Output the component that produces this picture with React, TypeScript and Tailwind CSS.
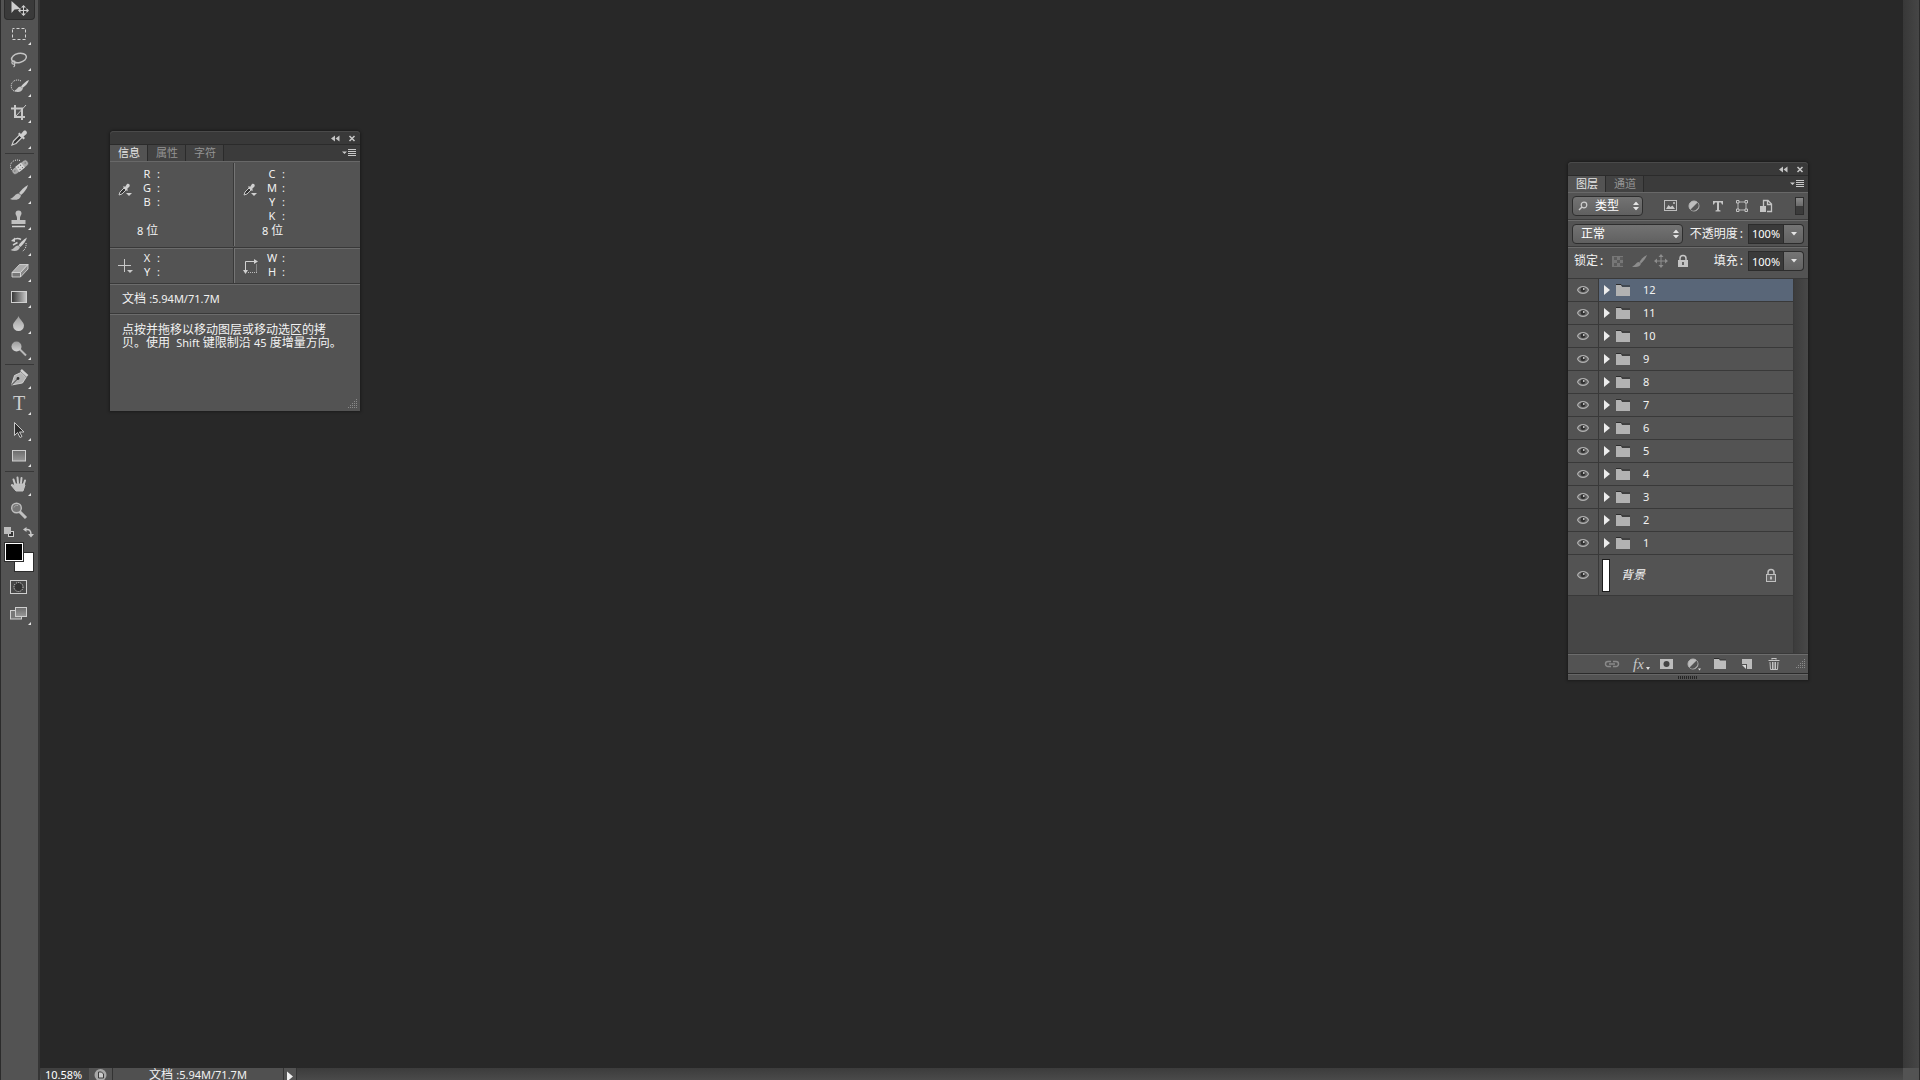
import { useState } from "react";
import type { ReactNode } from "react";
import clsx from "clsx";

const CORNER = <path d="M30 21v3h-3z" fill="#e4e4e4" />;

interface Tool {
  name: string;
  icon: ReactNode;
  corner?: boolean;
}

// Every tool glyph is drawn on a 37x26 grid, the size of its button.
const TOOL_GROUPS: Tool[][] = [
  [
    {
      name: "矩形选框工具",
      corner: true,
      icon: <rect x="11.5" y="7.5" width="13" height="11" fill="none" stroke="#d4d4d4" strokeDasharray="3 2" strokeDashoffset="1" />,
    },
    {
      name: "套索工具",
      corner: true,
      icon: (
        <g fill="none" stroke="#c4c4c4" strokeWidth="1.5">
          <ellipse cx="18" cy="11" rx="7.5" ry="4.5" transform="rotate(-12 18 11)" />
          <circle cx="12.5" cy="15.5" r="1.6" strokeWidth="1.2" />
          <path d="M13 17c1 1 1 2-.5 3" strokeWidth="1.2" />
        </g>
      ),
    },
    {
      name: "快速选择工具",
      corner: true,
      icon: (
        <>
          <path d="M20 8c-3-2-8-1-9.500 3-1 4 1 7 4 7.500" fill="none" stroke="#e0e0e0" strokeDasharray="1 1" />
          <path d="M28 7c-3 1-6 4-8 6.500l1.500 1.500c3-2 5.500-5 6.500-8z" fill="#d0d0d0" />
          <path d="M19.500 13.500c-3 0-3 3-6 4 2.500 2.500 7 2 8.500-2z" fill="#c4c4c4" />
        </>
      ),
    },
    {
      name: "裁剪工具",
      corner: true,
      icon: (
        <g fill="none" stroke="#c8c8c8">
          <path d="M14 6v12h10M10 9.500h11V21" strokeWidth="2" />
          <path d="M25 6L15 17" strokeWidth="1" />
        </g>
      ),
    },
    {
      name: "吸管工具",
      corner: true,
      icon: (
        <>
          <path d="M11 20l1.500-4 6-6 2.500 2.500-6 6z" fill="#333" stroke="#cfcfcf" strokeWidth="1.200" />
          <path d="M17 9l1.500-1.500L20 9l2.500-3c2-1.500 4.500 1 3 3L22.500 11.500 24 13l-1.500 1.500z" fill="#d0d0d0" />
        </>
      ),
    },
  ],
  [
    {
      name: "污点修复画笔工具",
      corner: true,
      icon: (
        <>
          <path d="M19 6.500c-4-1.500-9 .5-9.500 5 0 2 .5 4 2 5.500" fill="none" stroke="#e0e0e0" strokeDasharray="1 1" />
          <g transform="rotate(-38 19 13)">
            <rect x="9.500" y="10" width="19" height="6.500" rx="3" fill="#a9a9a9" stroke="#444" strokeWidth=".5" />
            <rect x="15.500" y="10" width="7" height="6.500" fill="#d6d6d6" />
            <path d="M17 12h1m2 0h1m-4 3h1m2 0h1M12 13h1m12 0h1" stroke="#555" />
          </g>
        </>
      ),
    },
    {
      name: "画笔工具",
      corner: true,
      icon: (
        <>
          <path d="M27 5c-4 2-7 5.500-9 8l2 2c3-2.500 6-6 7-10z" fill="#c9c9c9" />
          <path d="M17.500 13.500c-3.500 0-4 4-8.500 5.500 4 1.500 10 1.500 11-3.500z" fill="#bdbdbd" />
        </>
      ),
    },
    {
      name: "仿制图章工具",
      corner: true,
      icon: (
        <>
          <path d="M16 12c0-2-1.500-3-1.500-4.500a3 3 0 016 0C20.500 9 19 10 19 12v2h5.500v4h-14v-4H16z" fill="#c0c0c0" />
          <path d="M11 20.500h13" stroke="#d4d4d4" strokeWidth="1.500" />
        </>
      ),
    },
    {
      name: "历史记录画笔工具",
      corner: true,
      icon: (
        <>
          <path d="M26 5.500c-4 2-6.500 5-8.500 8l2 1.500c3-3 5.500-6 6.500-9.500z" fill="#cfcfcf" />
          <path d="M17 13.500c-3 0-4 3.500-7.500 4.500 3.500 1.500 8.500 1.500 9.500-3z" fill="#bdbdbd" />
          <path d="M20 7.500c-2.500-1.500-5-1.500-8 .5M16.500 10.500L12 13" fill="none" stroke="#cfcfcf" strokeWidth="1.500" />
          <path d="M10 9l4-3.500V10z" fill="#cfcfcf" />
          <path d="M25 11c.5 4-1 7-4 8.500" fill="none" stroke="#ddd" strokeDasharray="1 1" />
        </>
      ),
    },
    {
      name: "橡皮擦工具",
      corner: true,
      icon: (
        <>
          <path d="M11 14.500l7.500-8H27l-7.500 8z" fill="#aaa" stroke="#ddd" strokeWidth=".8" />
          <path d="M11 14.500h8.500V19H11z" fill="#777" stroke="#ddd" strokeWidth=".8" />
          <path d="M19.500 14.500l7.500-8V11l-7.500 8z" fill="#888" stroke="#ddd" strokeWidth=".8" />
        </>
      ),
    },
    {
      name: "渐变工具",
      corner: true,
      icon: <rect x="10.500" y="7.500" width="15" height="11" fill="url(#tool-gradient)" stroke="#d0d0d0" />,
    },
    {
      name: "模糊工具",
      corner: true,
      icon: <path d="M17.500 6c1 3.500 5.500 6 5.500 9.500a5.500 5.500 0 01-11 0C12 12 16.500 9.500 17.500 6z" fill="url(#tool-shine)" />,
    },
    {
      name: "减淡工具",
      corner: true,
      icon: (
        <>
          <path d="M18.500 13l6.500 6.500" stroke="#b8b8b8" strokeWidth="2" />
          <circle cx="15.500" cy="10.500" r="5" fill="url(#tool-shine)" />
        </>
      ),
    },
  ],
  [
    {
      name: "钢笔工具",
      corner: true,
      icon: (
        <>
          <path d="M10.500 20l3-9.500 6.500-3 5 5-3.500 5.500z" fill="#b2b2b2" stroke="#e0e0e0" strokeWidth=".8" />
          <path d="M10.500 20l6-6" stroke="#333" />
          <circle cx="17" cy="13.500" r="1.400" fill="#333" />
          <path d="M20 5l6.500 6" stroke="#cfcfcf" strokeWidth="2.500" />
        </>
      ),
    },
    {
      name: "横排文字工具",
      corner: true,
      icon: (
        <text x="18" y="19" textAnchor="middle" fontFamily="Liberation Serif, serif" fontSize="20" fill="#cdcdcd">
          T
        </text>
      ),
    },
    {
      name: "路径选择工具",
      corner: true,
      icon: <path d="M13.500 5.500v13l3-3 2.500 5 2-1-2.500-4.500h4.500z" fill="#2e2e2e" stroke="#c8c8c8" />,
    },
    {
      name: "矩形工具",
      corner: true,
      icon: <rect x="11.500" y="7.500" width="13" height="10.500" fill="url(#tool-flat)" stroke="#cfcfcf" />,
    },
  ],
  [
    {
      name: "抓手工具",
      corner: true,
      icon: (
        <g stroke="#c6c6c6" strokeLinecap="round" strokeLinejoin="round" fill="#c0c0c0">
          <path d="M14 12L12.500 7.500M17 11l-.5-5.500M20 11l.5-5M22.500 13L24 8.500" strokeWidth="2" />
          <path d="M13.500 12h9.500l1 1-2 6h-7l-5-6 1.500-.5 2.500 2z" strokeWidth="1" />
        </g>
      ),
    },
    {
      name: "缩放工具",
      icon: (
        <>
          <path d="M18.500 13.500L25 20" stroke="#c0c0c0" strokeWidth="3" />
          <circle cx="15.500" cy="10" r="4.800" fill="#777" stroke="#bfbfbf" strokeWidth="1.400" />
          <path d="M13 9.500c.5-1.500 2-2.500 4-2" fill="none" stroke="#aaa" />
        </>
      ),
    },
  ],
];

const INFO_TABS = ["信息", "属性", "字符"];
const LAYER_TABS = ["图层", "通道"];
const LAYERS = ["12", "11", "10", "9", "8", "7", "6", "5", "4", "3", "2", "1"];

function ToolButton({ tool }: { tool: Tool }) {
  return (
    <button type="button" aria-label={tool.name} className="block h-[26px] w-full">
      <svg width="37" height="26" viewBox="0 0 37 26">
        {tool.icon}
        {tool.corner && CORNER}
      </svg>
    </button>
  );
}

function Toolbar() {
  return (
    <nav aria-label="工具" className="flex w-10 shrink-0 flex-col border-r-2 border-l border-r-[#353535] border-l-[#2b2b2b] bg-[#535353]">
      <svg width="0" height="0" className="absolute">
        <defs>
          <linearGradient id="tool-gradient">
            <stop offset="0" stopColor="#333" />
            <stop offset="1" stopColor="#c8c8c8" />
          </linearGradient>
          <linearGradient id="tool-shine" x2="0" y2="1">
            <stop offset="0" stopColor="#9c9c9c" />
            <stop offset="1" stopColor="#d4d4d4" />
          </linearGradient>
          <linearGradient id="tool-flat" x2="0" y2="1">
            <stop offset="0" stopColor="#6c6c6c" />
            <stop offset="1" stopColor="#989898" />
          </linearGradient>
        </defs>
      </svg>
      <button type="button" aria-label="移动工具" aria-pressed="true" className="mx-[3px] mb-px h-5 rounded-b-sm border border-t-0 border-[#2c2c2c] bg-[#3a3a3a]">
        <svg width="29" height="18" viewBox="0 0 29 18">
          <path d="M6.500 0v12l3-3.500 6-.5z" fill="#cfcfcf" />
          <path d="M18.500 5v9M14 9.500h9" stroke="#cfcfcf" />
          <path d="M18.500 4l2.500 2.500h-5zM18.500 15l2.500-2.500h-5zM13 9.500L15.500 7v5zM24 9.500L21.500 7v5z" fill="#cfcfcf" />
        </svg>
      </button>
      {TOOL_GROUPS.map((group, i) => (
        <div key={i} className={clsx(i > 0 && "relative mt-0.5 before:mx-1 before:block before:h-px before:bg-[#383838]")}>
          {group.map((tool) => (
            <ToolButton key={tool.name} tool={tool} />
          ))}
        </div>
      ))}
      <div className="mt-px flex h-3.5 items-center gap-2 pl-[3px]">
        <button type="button" aria-label="默认前景色和背景色">
          <svg width="11" height="11" viewBox="0 0 11 11" className="block">
            <rect x="4.500" y="4.500" width="5" height="5" fill="#333" stroke="#d0d0d0" />
            <rect x="0" y="0" width="7" height="7" fill="#bdbdbd" />
          </svg>
        </button>
        <button type="button" aria-label="切换前景色和背景色">
          <svg width="11" height="11" viewBox="0 0 11 11" className="block">
            <path d="M3 2.500c3-.5 5 1 5 5" fill="none" stroke="#c8c8c8" strokeWidth="1.500" />
            <path d="M0 2.500L3.500 0v5zM5 7h6l-3 3.500z" fill="#c8c8c8" />
          </svg>
        </button>
      </div>
      <div className="mt-[3px] grid pl-[3px]">
        <button type="button" aria-label="背景色" className="col-start-1 row-start-1 mt-2.5 ml-2.5 h-5 w-5 border border-[#2c2c2c] bg-white" />
        <button type="button" aria-label="前景色" className="col-start-1 row-start-1 h-5 w-5 border border-[#2c2c2c] bg-black ring-1 ring-white ring-inset" />
      </div>
      <button type="button" aria-label="以快速蒙版模式编辑" className="mt-0.5 block h-[26px]">
        <svg width="37" height="26" viewBox="0 0 37 26">
          <rect x="9.500" y="6.500" width="16" height="13" fill="#484848" stroke="#cfcfcf" />
          <circle cx="17.500" cy="13" r="4.500" fill="#333" stroke="#e0e0e0" strokeDasharray="1 1" />
        </svg>
      </button>
      <button type="button" aria-label="更改屏幕模式" className="mt-px block h-[26px]">
        <svg width="37" height="26" viewBox="0 0 37 26">
          <rect x="9.500" y="9.500" width="11" height="8.500" fill="#777" stroke="#cfcfcf" />
          <rect x="14.500" y="6.500" width="11" height="9" fill="url(#tool-flat)" stroke="#cfcfcf" />
          {CORNER}
        </svg>
      </button>
    </nav>
  );
}

function PanelHeader() {
  return (
    <div className="flex h-[13px] items-center justify-end gap-2 rounded-t-sm border-t border-[#4a4a4a] bg-[#393939] pr-1">
      <button type="button" aria-label="折叠">
        <svg width="9" height="7" viewBox="0 0 9 7" className="block">
          <path d="M4 .5v6l-4-3zM8.500 .5v6l-4-3z" fill="#c4c4c4" />
        </svg>
      </button>
      <button type="button" aria-label="关闭">
        <svg width="8" height="7" viewBox="0 0 8 7" className="block">
          <path d="M1.500 1l5 5m0-5l-5 5" stroke="#c8c8c8" strokeWidth="1.500" />
        </svg>
      </button>
    </div>
  );
}

function PanelTabs({ tabs }: { tabs: string[] }) {
  const [active, setActive] = useState(tabs[0]);

  return (
    <div className="flex h-[18px] items-stretch border-t border-b border-t-[#2b2b2b] border-b-[#686868] bg-[#3b3b3b]">
      <div role="tablist" className="flex">
        {tabs.map((tab) => (
          <button
            key={tab}
            type="button"
            role="tab"
            aria-selected={tab === active}
            onClick={() => setActive(tab)}
            className={clsx(
              "border-r border-[#2b2b2b] pr-[7px] pl-2 text-[11px] leading-4",
              tab === active ? "bg-[#535353] text-[#e6e6e6]" : "bg-[#424242] text-[#949494]",
            )}
          >
            {tab}
          </button>
        ))}
      </div>
      <button type="button" aria-label="面板菜单" className="mr-1 ml-auto">
        <svg width="14" height="9" viewBox="0 0 14 9" className="block">
          <path d="M0 2.500h5L2.500 5z" fill="#c8c8c8" />
          <path d="M6 .5h8m-8 2h8m-8 2h8m-8 2h8" stroke="#c8c8c8" />
        </svg>
      </button>
    </div>
  );
}

function ResizeGrip() {
  return (
    <svg width="10" height="10" viewBox="0 0 10 10" className="block">
      <path
        d="M8.500 0v1m0 1v1m-2 0v-1m2 2v1m-2 0v-1m-2 1v-1m4 2v1m-2 0v-1m-2 1v-1m-2 1v-1m6 2v1m-2 0v-1m-2 1v-1m-2 1v-1m-2 1v-1"
        stroke="#8b8b8b"
      />
    </svg>
  );
}

function Eyedropper() {
  return (
    <svg width="14" height="14" viewBox="0 0 14 14" className="mt-4 block">
      <path d="M1 12l1-3 4-4 2 2-4 4z" fill="#333" stroke="#c8c8c8" />
      <path d="M5 4l1-1 1 1 2-3c1.500-1 3.500.5 2.500 2.500L9 6l1 1-1 1z" fill="#cfcfcf" />
      <path d="M8 10h6l-3 3z" fill="#d0d0d0" />
    </svg>
  );
}

function Readout({ icon, labels, depth }: { icon: ReactNode; labels: string[]; depth?: boolean }) {
  return (
    <div className="flex gap-[3px] pl-2">
      <div className="w-4">{icon}</div>
      <dl className="flex w-8 flex-col">
        {labels.map((label) => (
          <div key={label} className="flex">
            <dt className="w-5 text-center">{label}</dt>
            <dd>:</dd>
          </div>
        ))}
        {depth && (
          <div className="mt-auto whitespace-nowrap">
            8 <span className="text-xs leading-none">位</span>
          </div>
        )}
      </dl>
    </div>
  );
}

function InfoPanel() {
  return (
    <section aria-label="信息" className="absolute top-[131px] left-[70px] flex w-[250px] flex-col rounded-t-sm bg-[#535353] shadow-[0_0_3px_1px_rgba(0,0,0,0.35)]">
      <PanelHeader />
      <PanelTabs tabs={INFO_TABS} />
      <div className="grid grid-cols-[124px_1fr] pt-px leading-[14px]">
        <div className="flex h-[83px] border-r border-[#393939] pt-1 pb-2">
          <Readout icon={<Eyedropper />} labels={["R", "G", "B"]} depth />
        </div>
        <div className="flex h-[83px] border-l border-[#757575] pt-1 pb-2">
          <Readout icon={<Eyedropper />} labels={["C", "M", "Y", "K"]} depth />
        </div>
      </div>
      <div className="mt-px grid grid-cols-[124px_1fr] border-t border-[#393939] leading-[14px] shadow-[inset_0_1px_0_#6c6c6c]">
        <div className="flex h-[35px] border-r border-[#393939] pt-[3px]">
          <Readout
            icon={
              <svg width="16" height="16" viewBox="0 0 16 16" className="mt-2 block">
                <path d="M6.500 0v13M0 6.500h13" stroke="#c8c8c8" />
                <path d="M9 11h6l-3 3z" fill="#c8c8c8" />
              </svg>
            }
            labels={["X", "Y"]}
          />
        </div>
        <div className="flex h-[35px] border-l border-[#757575] pt-[3px]">
          <Readout
            icon={
              <svg width="16" height="16" viewBox="0 0 16 16" className="mt-2 block">
                <path d="M2.500 13V2.500H12" fill="none" stroke="#d0d0d0" />
                <path d="M11 0l4 2.500L11 5zM0 11h5l-2.500 4z" fill="#d0d0d0" />
                <path d="M5 13.500h9m-.5-1V5" stroke="#bbb" strokeDasharray="1 1" />
              </svg>
            }
            labels={["W", "H"]}
          />
        </div>
      </div>
      <p className="border-t border-[#393939] px-3 py-2 leading-[13px] shadow-[inset_0_1px_0_#6c6c6c]">
        <span className="text-xs leading-none">文档 </span>:5.94M/71.7M
      </p>
      <p className="h-[86px] border-t border-[#393939] px-3 pt-[9px] text-xs leading-[13px] whitespace-nowrap shadow-[inset_0_1px_0_#6c6c6c]">
        点按并拖移以移动图层或移动选区的拷
        <br />
        贝。使用&nbsp;&nbsp;<span className="text-[11px]">Shift</span> 键限制沿 <span className="text-[11px]">45</span> 度增量方向。
      </p>
      <div className="flex h-3 justify-end pr-0.5">
        <ResizeGrip />
      </div>
    </section>
  );
}

function UpDown() {
  return (
    <svg width="6" height="9" viewBox="0 0 6 9" className="pointer-events-none absolute top-1/2 right-1 -translate-y-1/2">
      <path d="M0 3.500h6L3 0zM0 5.500h6L3 9z" fill="#e4e4e4" />
    </svg>
  );
}

function PercentField({ id, label }: { id: string; label: string }) {
  return (
    <div className="ml-auto flex items-center">
      <label htmlFor={id} className="mr-[5px] text-xs">
        {label}
        <span className="pl-0.5">:</span>
      </label>
      <input
        id={id}
        defaultValue="100%"
        className="h-5 w-9 border border-[#2c2c2c] bg-[#3a3a3a] px-[3px] text-[11px] text-white outline-none"
      />
      <button
        type="button"
        aria-label={`${label}滑块`}
        className="flex h-5 w-5 items-center justify-center rounded-r-sm border border-l-0 border-[#2c2c2c] bg-linear-to-b from-[#757575] to-[#626262]"
      >
        <svg width="6" height="4" viewBox="0 0 6 4">
          <path d="M0 0h6L3 3.500z" fill="#e4e4e4" />
        </svg>
      </button>
    </div>
  );
}

function AdjustIcon() {
  return (
    <>
      <circle cx="8" cy="8" r="5" fill="#bdbdbd" stroke="#b4b4b4" />
      <path d="M4.500 11.500a5 5 0 007-7z" fill="#555" />
    </>
  );
}

function PaddleLock() {
  return (
    <>
      <path d="M5 8V5.500a3 3 0 016 0V8" fill="none" stroke="#c8c8c8" strokeWidth="1.500" />
      <rect x="3" y="7" width="10" height="7" fill="#c4c4c4" />
      <path d="M8 9v3" stroke="#444" strokeWidth="1.500" />
    </>
  );
}

function FolderGlyph() {
  return (
    <>
      <path d="M1 2.500h5l1 1.500h8" stroke="#2c2c2c" fill="none" />
      <path d="M1 3h5l1 2h8v9H1z" fill="#b2b2b2" />
    </>
  );
}

function IconButton({ label, children }: { label: string; children: ReactNode }) {
  return (
    <button type="button" aria-label={label}>
      <svg width="16" height="16" viewBox="0 0 16 16" className="block">
        {children}
      </svg>
    </button>
  );
}

function FilterRow() {
  return (
    <div className="flex h-[27px] items-center gap-2 border-b border-[#3c3c3c] px-1">
      <div className="relative mr-[11px]">
        <select
          aria-label="滤镜类型"
          className="h-5 w-[71px] appearance-none rounded-sm border border-[#2e2e2e] bg-linear-to-b from-[#737373] to-[#606060] pl-[22px] text-xs text-white"
        >
          <option>类型</option>
        </select>
        <svg width="10" height="10" viewBox="0 0 10 10" className="pointer-events-none absolute top-[5px] left-1.5">
          <circle cx="6" cy="4" r="2.800" fill="none" stroke="#cfcfcf" strokeWidth="1.200" />
          <path d="M4 6L1 9" stroke="#cfcfcf" strokeWidth="1.500" />
        </svg>
        <UpDown />
      </div>
      <IconButton label="像素图层">
        <rect x="2.500" y="2.500" width="12" height="10" fill="#555" stroke="#bdbdbd" />
        <path d="M4 11l2.500-4 2 2 2-1.500L13 11z" fill="#c8c8c8" />
        <path d="M11 5h2" stroke="#c8c8c8" strokeWidth="1.500" />
      </IconButton>
      <IconButton label="调整图层">
        <AdjustIcon />
      </IconButton>
      <IconButton label="文字图层">
        <path d="M3 3h10v3.500h-1L11 4.500H9V12l1.500.5v1h-5v-1L7 12V4.500H5L4 6.500H3z" fill="#c4c4c4" />
      </IconButton>
      <IconButton label="形状图层">
        <path d="M5 4h6M5 12h6M4 5v6M12 5v6" stroke="#b8b8b8" />
        <path d="M2.500 2.500h2.500v2.500H2.500zM11 2.500h2.500v2.500H11zM2.500 11h2.500v2.500H2.500zM11 11h2.500v2.500H11z" fill="#555" stroke="#c4c4c4" />
      </IconButton>
      <IconButton label="智能对象">
        <path d="M5.500 8V2.500H10L13.500 6v7.500H9M9.500 2.500v4h4" fill="none" stroke="#c4c4c4" strokeWidth="1.300" />
        <rect x="2" y="8" width="6" height="6" fill="#c4c4c4" />
      </IconButton>
      <button
        type="button"
        aria-label="打开或关闭图层滤镜"
        className="ml-auto h-[18px] w-[9px] border border-[#2e2e2e] bg-[#3b3b3b]"
      >
        <span className="block h-2 bg-linear-to-b from-[#8a8a8a] to-[#6a6a6a]" />
        <span className="block h-2" />
      </button>
    </div>
  );
}

function LockRow() {
  return (
    <div className="flex h-8 items-center gap-1.5 border-t border-b border-t-[#6c6c6c] border-b-[#393939] pr-1 pb-1 pl-1.5">
      <span className="text-xs">
        锁定<span className="pl-0.5">:</span>
      </span>
      <IconButton label="锁定透明像素">
        <rect x="3" y="3" width="11" height="11" fill="#777" />
        <path d="M5 4h3v3H5zM11 4h3v3h-3zM8 7h3v3H8zM5 10h3v3H5zM11 10h3v3h-3z" fill="#5c5c5c" />
      </IconButton>
      <IconButton label="锁定图像像素">
        <path d="M16 2c-4 2-6 4.500-7.500 7l1.500 1.500C12.500 8 15 5 16 2z" fill="#8d8d8d" />
        <path d="M8 9c-3 0-3.500 3.500-7 4.500 3.500 1 8 1 9-3z" fill="#8d8d8d" />
      </IconButton>
      <IconButton label="锁定位置">
        <path d="M8 3v10M3 8h10" stroke="#8d8d8d" />
        <path d="M8 1l2.500 3h-5zM8 15l2.500-3h-5zM1 8l3-2.500v5zM15 8l-3-2.500v5z" fill="#8d8d8d" />
      </IconButton>
      <IconButton label="锁定全部">
        <PaddleLock />
      </IconButton>
      <PercentField id="fill" label="填充" />
    </div>
  );
}

function EyeButton() {
  return (
    <button type="button" aria-label="指示图层可见性" className="flex w-[31px] items-center justify-center border-r border-[#393939]">
      <svg width="12" height="10" viewBox="0 0 12 10">
        <path d="M.5 5C2.500 .5 9.500 .5 11.500 5 9.500 9.500 2.500 9.500 .5 5z" fill="#646464" stroke="#b0b0b0" strokeWidth="1.200" />
        <circle cx="6" cy="4.700" r="2.400" fill="#303030" />
        <circle cx="6.800" cy="4" r=".9" fill="#d4d4d4" />
      </svg>
    </button>
  );
}

function LayerList() {
  const [selected, setSelected] = useState("12");

  return (
    <div className="flex h-[375px]">
      <ul className="flex-1 bg-[#464646]">
        {LAYERS.map((name) => (
          <li key={name} className="flex h-[23px] border-b border-[#393939] bg-[#535353]">
            <EyeButton />
            <button
              type="button"
              onClick={() => setSelected(name)}
              className={clsx("flex flex-1 items-center pl-[5px]", name === selected && "bg-[#596678]")}
            >
              <svg width="6" height="10" viewBox="0 0 6 10">
                <path d="M0 0l6 5-6 5z" fill="#ececec" />
              </svg>
              <svg width="16" height="16" viewBox="0 0 16 16" className="mr-3 ml-[5px]">
                <FolderGlyph />
              </svg>
              {name}
            </button>
          </li>
        ))}
        <li className="flex h-[41px] border-b border-[#393939] bg-[#535353]">
          <EyeButton />
          <button type="button" className="flex flex-1 items-center pr-3.5 pl-[3px]">
            <span className="h-[33px] w-2 border border-[#1c1c1c] bg-white" />
            <span className="ml-[11px] text-xs italic">背景</span>
            <svg width="16" height="16" viewBox="0 0 16 16" className="ml-auto">
              <path d="M5 7V5.500a3 3 0 016 0V7" fill="none" stroke="#c0c0c0" strokeWidth="1.500" />
              <rect x="3.500" y="7.500" width="9" height="7" fill="#666" stroke="#c0c0c0" />
              <path d="M8 9.500v3" stroke="#ddd" strokeWidth="1.500" />
            </svg>
          </button>
        </li>
      </ul>
      <div className="w-[15px] border-l border-[#393939] bg-linear-to-r from-[#3c3c3c] to-[#484848]" />
    </div>
  );
}

function LayersFooter() {
  return (
    <div className="flex h-[19px] items-center gap-[11px] border-t border-[#6c6c6c] pl-9 shadow-[0_-1px_0_#393939]">
      <IconButton label="链接图层">
        <path d="M7 5.500H4a2.500 2.500 0 000 5h3M9 5.500h3a2.500 2.500 0 010 5H9M5 8h6" fill="none" stroke="#8a8a8a" strokeWidth="1.500" />
      </IconButton>
      <button type="button" aria-label="添加图层样式" className="flex w-4 items-end pl-0.5 text-[#c8c8c8]">
        <span className="font-['Liberation_Serif',serif] text-[15px] leading-4 italic">fx</span>
        <svg width="4" height="4" viewBox="0 0 4 4" className="mb-px ml-0.5 shrink-0">
          <path d="M0 0h4L2 3z" fill="#e0e0e0" />
        </svg>
      </button>
      <IconButton label="添加图层蒙版">
        <rect x="2" y="3" width="13" height="10" fill="#bcbcbc" />
        <circle cx="8.500" cy="8" r="3" fill="#444" />
      </IconButton>
      <IconButton label="创建新的填充或调整图层">
        <AdjustIcon />
        <path d="M13 12.500h3L14.500 14.500z" fill="#e0e0e0" />
      </IconButton>
      <IconButton label="创建新组">
        <path d="M2 2h5l1 1.500h6v1H2z" fill="#2c2c2c" />
        <path d="M2 3h5l1 1.500h6V13H2z" fill="#bcbcbc" />
      </IconButton>
      <IconButton label="创建新图层">
        <path d="M3 3h10v10H8V8H3z" fill="#bcbcbc" />
        <path d="M3 9h4v4z" fill="#dcdcdc" />
      </IconButton>
      <IconButton label="删除图层">
        <path d="M6 3.500v-1h4v1M2.500 4.500h11" fill="none" stroke="#c4c4c4" strokeWidth="1.200" />
        <path d="M4 6l.5 7.500h7L12 6M6.500 6v7M8 6v7M9.500 6v7" fill="none" stroke="#c4c4c4" strokeWidth="1" />
      </IconButton>
      <div className="mr-0.5 ml-auto">
        <ResizeGrip />
      </div>
    </div>
  );
}

function LayersPanel() {
  return (
    <section aria-label="图层" className="absolute top-[162px] right-[95px] flex w-60 flex-col rounded-t-sm bg-[#535353] shadow-[0_0_3px_1px_rgba(0,0,0,0.35)]">
      <PanelHeader />
      <PanelTabs tabs={LAYER_TABS} />
      <FilterRow />
      <div className="flex h-[27px] items-center border-t border-b border-t-[#6c6c6c] border-b-[#3c3c3c] px-1">
        <div className="relative">
          <select
            aria-label="混合模式"
            className="h-5 w-[111px] appearance-none rounded-sm border border-[#2e2e2e] bg-linear-to-b from-[#737373] to-[#606060] pl-2 text-xs text-white"
          >
            <option>正常</option>
          </select>
          <UpDown />
        </div>
        <PercentField id="opacity" label="不透明度" />
      </div>
      <LockRow />
      <LayerList />
      <LayersFooter />
      <div className="flex h-[7px] items-center justify-center border-t border-[#2b2b2b] shadow-[inset_0_1px_0_#666]">
        <svg width="20" height="3" viewBox="0 0 20 3">
          <path d="M0 1.500h20" stroke="#252525" strokeWidth="3" strokeDasharray="1 1" />
        </svg>
      </div>
    </section>
  );
}

function StatusBar() {
  return (
    <footer className="flex h-3 items-start overflow-hidden bg-linear-to-b from-[#3c3c3c] to-[#4a4a4a] leading-[14px]">
      <input
        aria-label="缩放比例"
        defaultValue="10.58%"
        className="ml-px h-3.5 w-12 bg-[#404040] px-1 text-[11px] text-white outline-none"
      />
      <button type="button" aria-label="版本信息" className="flex h-3.5 w-6 justify-center border-r border-[#333] bg-[#535353]">
        <svg width="13" height="14" viewBox="0 0 13 14">
          <circle cx="6.500" cy="7" r="6" fill="#a8a8a8" />
          <path d="M4.500 4h3l2 2v4h-5z" fill="#ccc" stroke="#3c3c3c" />
        </svg>
      </button>
      <div className="w-[170px] bg-[#505050] text-center">
        <span className="text-xs leading-none">文档 </span>:5.94M/71.7M
      </div>
      <button type="button" aria-label="状态栏菜单" className="flex h-3.5 w-3.5 justify-center border-r border-l border-[#333] bg-[#535353]">
        <svg width="6" height="14" viewBox="0 0 6 14">
          <path d="M0 3.500l6 5-6 5z" fill="#f0f0f0" />
        </svg>
      </button>
    </footer>
  );
}

export default function App() {
  return (
    <div className="flex h-screen overflow-hidden bg-[#282828] font-['Noto_Sans','Noto_Sans_CJK_SC',sans-serif] text-[11px] text-[#f2f2f2]">
      <Toolbar />
      <main className="relative flex min-w-0 flex-1">
        <div className="flex min-w-0 flex-1 flex-col">
          <div className="flex-1" />
          <StatusBar />
        </div>
        <div className="flex w-[17px] flex-col border-r border-[#2b2b2b]">
          <div className="flex-1 bg-linear-to-r from-[#383838] to-[#464646]" />
          <div className="h-3 bg-[#535353]" />
        </div>
        <InfoPanel />
        {/* the layers window keeps to the right edge of the workspace */}
        <div className="absolute inset-y-0 right-[17px]">
          <LayersPanel />
        </div>
      </main>
    </div>
  );
}
